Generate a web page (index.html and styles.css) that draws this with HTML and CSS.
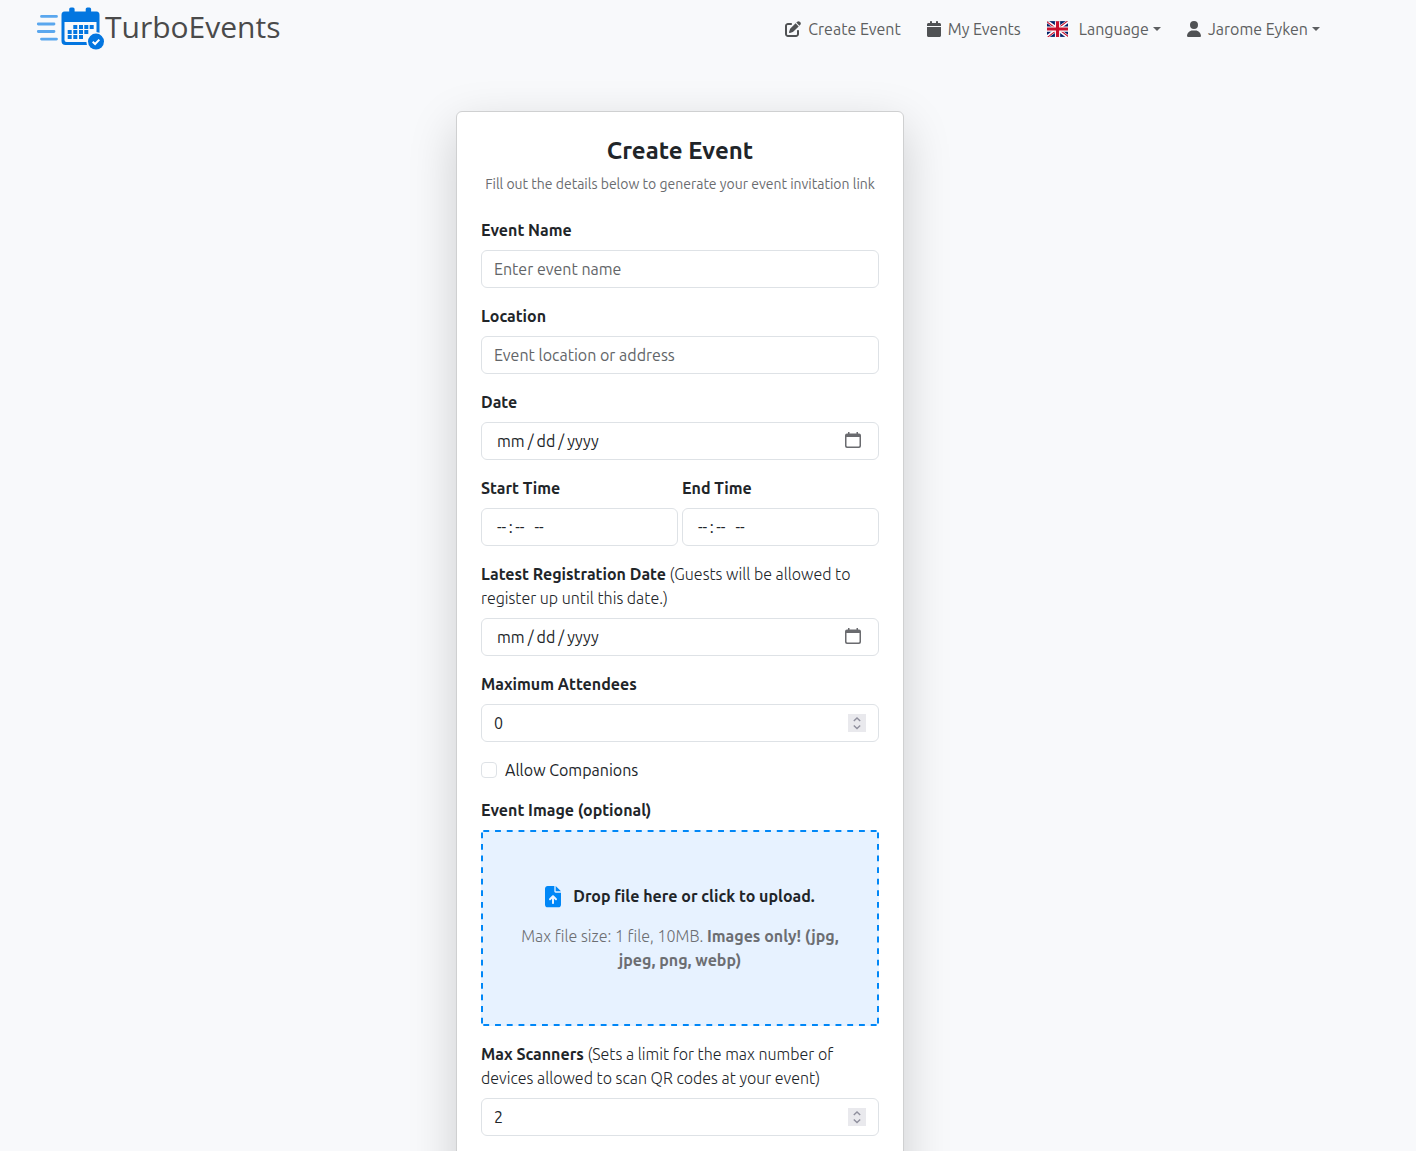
FILE: index.html
```html
<!DOCTYPE html>
<html lang="en">
<head>
<meta charset="utf-8">
<title>TurboEvents - Create Event</title>
<link rel="stylesheet" href="styles.css">
</head>
<body>
<header class="navbar">
  <a class="brand">
    <svg class="brand-mark" width="70" height="46" viewBox="0 0 70 46">
      <g stroke="#5aa7ee" stroke-width="2.8" stroke-linecap="round">
        <path d="M7.500 12.400H22.500M4.300 20H20M4.300 27.500H20M7.500 35.100H22.500"/>
      </g>
      <rect x="35.200" y="3.500" width="5.400" height="8" rx="1.600" fill="#0376e0"/>
      <rect x="51.700" y="3.500" width="5.400" height="8" rx="1.600" fill="#0376e0"/>
      <path fill="#0376e0" fill-rule="evenodd" d="M30.500 7.500H62.500Q65.500 7.500 65.500 11V37Q65.500 41 61.500 41H31.500Q27.500 41 27.500 37V11Q27.500 7.500 30.500 7.500ZM30.500 18V36Q30.500 38 32.500 38H62.500V18Z"/>
      <path fill="#0376e0" d="M39.300 21h4v4h-4zM45 21h4v4h-4zM50.300 21h4v4h-4zM55.700 21h4v4h-4zM33.700 26h4v4h-4zM39.300 26h4v4h-4zM45 26h4v4h-4zM50.300 26h4v4h-4zM33.700 31h4v4h-4zM39.300 31h4v4h-4zM45 31h4v4h-4z"/>
      <circle cx="62" cy="37.600" r="9.700" fill="#f8f9fb"/>
      <circle cx="62" cy="37.600" r="8" fill="#0376e0"/>
      <path d="M58.700 37.800L61.100 40L65.300 35.600" fill="none" stroke="#fff" stroke-width="2"/>
    </svg>
    <span class="brand-name">TurboEvents</span>
  </a>
  <nav class="nav">
    <a class="nav-link">
      <svg width="16" height="16" viewBox="0 0 512 512" fill="currentColor"><path d="M471.600 21.700c-21.900-21.900-57.300-21.900-79.200 0L362.300 51.700l97.900 97.900 30.100-30.100c21.900-21.900 21.900-57.300 0-79.200L471.600 21.700zm-299.200 220c-6.100 6.100-10.800 13.600-13.500 21.900l-29.600 88.800c-2.900 8.600-.6 18.100 5.800 24.600s15.900 8.700 24.600 5.800l88.800-29.600c8.200-2.700 15.700-7.400 21.900-13.500L437.700 172.300 339.700 74.300 172.400 241.700zM96 64C43 64 0 107 0 160L0 416c0 53 43 96 96 96l256 0c53 0 96-43 96-96l0-96c0-17.700-14.300-32-32-32s-32 14.300-32 32l0 96c0 17.700-14.300 32-32 32L96 448c-17.700 0-32-14.300-32-32l0-256c0-17.700 14.300-32 32-32l96 0c17.700 0 32-14.300 32-32s-14.300-32-32-32L96 64z"/></svg>
      <span>Create Event</span>
    </a>
    <a class="nav-link">
      <svg width="14" height="16" viewBox="0 0 448 512" fill="currentColor"><path d="M96 32l0 32L48 64C21.500 64 0 85.500 0 112l0 48 448 0 0-48c0-26.500-21.500-48-48-48l-48 0 0-32c0-17.700-14.300-32-32-32s-32 14.300-32 32l0 32L160 64l0-32c0-17.700-14.300-32-32-32S96 14.300 96 32zM448 192L0 192 0 464c0 26.500 21.500 48 48 48l352 0c26.500 0 48-21.500 48-48l0-272z"/></svg>
      <span>My Events</span>
    </a>
    <a class="nav-link nav-language">
      <svg class="flag" width="21" height="16" viewBox="0 0 640 480"><path fill="#012169" d="M0 0h640v480H0z"/><path fill="#fff" d="m75 0 244 181L562 0h78v62L400 241l240 178v61h-80L320 301 81 480H0v-60l239-178L0 64V0z"/><path fill="#c8102e" d="m424 281 216 159v40L369 281zm-184 20 6 35L54 480H0zM640 0v3L391 191l2-44L590 0zM0 0l239 176h-60L0 42z"/><path fill="#fff" d="M241 0v480h160V0zM0 160v160h640V160z"/><path fill="#c8102e" d="M0 193v96h640v-96zM273 0v480h96V0z"/></svg>
      <span class="caret">Language</span>
    </a>
    <a class="nav-link">
      <svg width="14" height="16" viewBox="0 0 448 512" fill="currentColor"><path d="M224 256A128 128 0 1 0 224 0a128 128 0 1 0 0 256zm-45.700 48C79.800 304 0 383.800 0 482.300C0 498.700 13.300 512 29.700 512l388.600 0c16.400 0 29.700-13.300 29.700-29.700C448 383.800 368.200 304 269.700 304l-91.400 0z"/></svg>
      <span class="caret">Jarome Eyken</span>
    </a>
  </nav>
</header>
<main class="page">
  <form class="card">
    <h1 class="title">Create Event</h1>
    <p class="subtitle">Fill out the details below to generate your event invitation link</p>

    <div class="field">
      <label class="label"><b>Event Name</b></label>
      <div class="control placeholder">Enter event name</div>
    </div>
    <div class="field">
      <label class="label"><b>Location</b></label>
      <div class="control placeholder">Event location or address</div>
    </div>
    <div class="field">
      <label class="label"><b>Date</b></label>
      <div class="control segments">
        <span>mm</span><span>/</span><span>dd</span><span>/</span><span>yyyy</span>
        <svg class="picker" width="16" height="16" viewBox="0 0 16 16"><path fill="#6a6b6f" fill-rule="evenodd" d="M3 0h1.500v1.500h7V0H13v1.500h1Q16 1.500 16 3.500V14Q16 16 14 16H2Q0 16 0 14V3.500Q0 1.500 2 1.500H3ZM1.500 5V13.500Q1.500 14.500 2.500 14.500H13.500Q14.500 14.500 14.500 13.500V5Z"/></svg>
      </div>
    </div>
    <div class="field-row">
      <div class="field">
        <label class="label"><b>Start Time</b></label>
        <div class="control segments time"><span>--</span><span>:</span><span>--</span><span class="ampm">--</span></div>
      </div>
      <div class="field">
        <label class="label"><b>End Time</b></label>
        <div class="control segments time"><span>--</span><span>:</span><span>--</span><span class="ampm">--</span></div>
      </div>
    </div>
    <div class="field">
      <label class="label"><b>Latest Registration Date</b> (Guests will be allowed to register up until this date.)</label>
      <div class="control segments">
        <span>mm</span><span>/</span><span>dd</span><span>/</span><span>yyyy</span>
        <svg class="picker" width="16" height="16" viewBox="0 0 16 16"><path fill="#6a6b6f" fill-rule="evenodd" d="M3 0h1.500v1.500h7V0H13v1.500h1Q16 1.500 16 3.500V14Q16 16 14 16H2Q0 16 0 14V3.500Q0 1.500 2 1.500H3ZM1.500 5V13.500Q1.500 14.500 2.500 14.500H13.500Q14.500 14.500 14.500 13.500V5Z"/></svg>
      </div>
    </div>
    <div class="field">
      <label class="label"><b>Maximum Attendees</b></label>
      <div class="control">
        <span>0</span>
        <svg class="spinner" width="18" height="18" viewBox="0 0 18 18"><path d="M5.800 7L9 4L12.200 7M5.800 11.500L9 14.500L12.200 11.500" fill="none" stroke="#8f8f9d" stroke-width="1.400"/></svg>
      </div>
    </div>
    <div class="check">
      <span class="check-box"></span>
      <label>Allow Companions</label>
    </div>
    <div class="field">
      <label class="label"><b>Event Image (optional)</b></label>
      <div class="dropzone">
        <svg class="drop-outline" width="398" height="196" viewBox="0 0 398 196" fill="none" stroke="#0087f7" stroke-width="2">
          <path stroke-dasharray="5.870 5.870" d="M2.300 1H395.700M2.300 195H395.700"/>
          <path stroke-dasharray="5.790 5.790" d="M1 2.400V193.600M397 2.400V193.600"/>
        </svg>
        <div class="drop-title">
          <svg class="drop-icon" width="16" height="21.330" viewBox="0 0 384 512" fill="#0087f7"><path d="M64 0C28.700 0 0 28.700 0 64L0 448c0 35.300 28.700 64 64 64l256 0c35.300 0 64-28.700 64-64l0-288-128 0c-17.700 0-32-14.300-32-32L224 0 64 0zM256 0l0 128 128 0L256 0zM216 408c0 13.300-10.700 24-24 24s-24-10.700-24-24l0-102.100-31 31c-9.400 9.400-24.600 9.400-33.900 0s-9.400-24.600 0-33.900l72-72c9.400-9.400 24.600-9.400 33.900 0l72 72c9.400 9.400 9.400 24.600 0 33.900s-24.600 9.400-33.900 0l-31-31L216 408z"/></svg>
          <b>Drop file here or click to upload.</b>
        </div>
        <p class="drop-note">Max file size: 1 file, 10MB. <b>Images only! (jpg, jpeg, png, webp)</b></p>
      </div>
    </div>
    <div class="field">
      <label class="label"><b>Max Scanners</b> (Sets a limit for the max number of devices allowed to scan QR codes at your event)</label>
      <div class="control">
        <span>2</span>
        <svg class="spinner" width="18" height="18" viewBox="0 0 18 18"><path d="M5.800 7L9 4L12.200 7M5.800 11.500L9 14.500L12.200 11.500" fill="none" stroke="#8f8f9d" stroke-width="1.400"/></svg>
      </div>
    </div>
  </form>
</main>
</body>
</html>
```
FILE: styles.css
```css
* {
  box-sizing: border-box;
}

html {
  height: 100%;
}

body {
  display: flex;
  flex-direction: column;
  margin: 0;
  height: 100%;
  overflow: hidden;
  background: #f8f9fb;
  color: #212529;
  font: 400 16px/24px Ubuntu, "Open Sans", "Noto Sans", sans-serif;
}

b {
  font-weight: 600;
}

svg {
  flex: none;
}

.navbar {
  display: flex;
  flex: none;
  justify-content: space-between;
  align-items: center;
  height: 58px;
  padding: 0 96px 0 34px;
}

.brand {
  display: flex;
  align-items: center;
}

.brand-mark {
  margin-top: -4px;
}

.brand-name {
  margin: -5px 0 0 1px;
  color: #4a4a4a;
  font: 400 30px/40px "Open Sans", "Noto Sans", sans-serif;
}

.nav {
  display: flex;
  gap: 26px;
  color: #5d5f61;
}

.nav-link svg {
  color: #505254;
}

.nav-link {
  display: flex;
  align-items: center;
  gap: 7px;
}

.nav-language {
  gap: 11px;
}

.caret {
  display: flex;
  align-items: center;
  gap: 4px;
}

.caret::after {
  content: "";
  border: 4.800px solid transparent;
  border-top-color: currentColor;
  border-bottom: 0;
}

.page {
  display: flex;
  flex: 1;
  justify-content: center;
  min-height: 0;
  overflow: hidden;
  padding: 53px 56px 0 0;
}

.card {
  width: 448px;
  height: 1100px;
  padding: 24px;
  border: 1px solid #cfd0d1;
  border-radius: 6px;
  background: #fff;
  box-shadow: 0 16px 48px rgba(0, 0, 0, 0.175);
}

.title {
  margin: 0 0 9px;
  font-size: 24px;
  font-weight: 600;
  line-height: 29px;
  text-align: center;
}

.subtitle {
  margin: 0 -4px 23px;
  color: #6a6c6f;
  font-size: 14px;
  line-height: 21px;
  text-align: center;
}

.field {
  margin-bottom: 16px;
}

.field-row {
  display: grid;
  grid-template-columns: 1fr 1fr;
  gap: 4px;
}

.label {
  display: block;
  margin-bottom: 8px;
  font-weight: 300;
}

.control {
  display: flex;
  align-items: center;
  height: 38px;
  padding: 0 12px;
  border: 1px solid #dee2e6;
  border-radius: 6px;
  background: #fff;
}

.placeholder {
  color: #626568;
}

.segments {
  gap: 3px;
  padding: 0 17px 0 15px;
}

.time {
  gap: 2.500px;
}

.ampm {
  margin-left: 7.500px;
}

.picker {
  margin: -2px 0 0 auto;
}

.spinner {
  margin-left: auto;
  background: #e9e9ed;
}

.check {
  display: flex;
  align-items: center;
  gap: 8px;
  margin-bottom: 16px;
}

.check-box {
  width: 16px;
  height: 16px;
  border: 1px solid #dee2e6;
  border-radius: 4px;
  background: #fff;
}

.dropzone {
  position: relative;
  display: flex;
  flex-direction: column;
  align-items: center;
  justify-content: center;
  gap: 16px;
  height: 196px;
  padding: 0 36px;
  border-radius: 5px;
  background: #e7f2ff;
}

.drop-outline {
  position: absolute;
  inset: 0;
}

.drop-title {
  display: flex;
  align-items: center;
  gap: 12px;
}

.drop-icon {
  margin: 1px 0 -1px;
}

.drop-note {
  margin: 0;
  color: #6c6e72;
  font-weight: 300;
  text-align: center;
}
```
